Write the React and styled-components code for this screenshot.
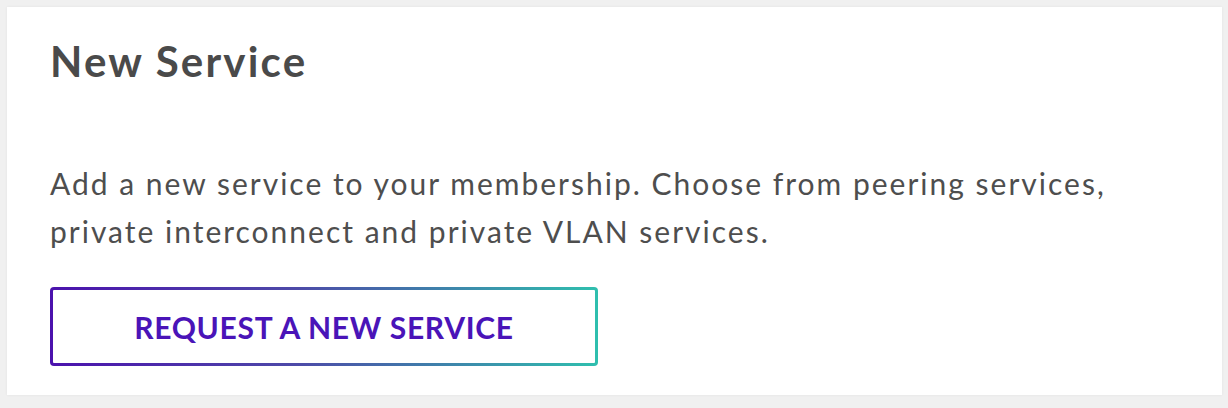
import React from 'react';
import styled, { createGlobalStyle } from 'styled-components';

const GlobalStyle = createGlobalStyle`
  body {
    margin: 0;
    background-color: #f0f0f0;
    font-family: Lato, "Open Sans", sans-serif;
  }
`;

const Page = styled.div`
  height: 408px;
  padding: 7px 6px 0 7px;
  box-sizing: border-box;
`;

const Card = styled.div`
  background-color: #ffffff;
  box-shadow: 0 0 3px rgba(0, 0, 0, 0.06);
  height: 388px;
  box-sizing: border-box;
  padding: 28px 43px 0;
  display: flex;
  flex-direction: column;
`;

const Title = styled.h2`
  margin: 0;
  font-size: 42px;
  font-weight: 700;
  line-height: 52px;
  letter-spacing: 2.2px;
  color: #4a4a4a;
`;

const Description = styled.p`
  margin: 72px 0 0;
  font-size: 30px;
  line-height: 48px;
  letter-spacing: 2px;
  color: #4e4e4e;
  max-width: 1100px;
`;

const OutlineButton = styled.button`
  margin-top: 32px;
  width: 548px;
  height: 79px;
  border: 3px solid transparent;
  border-radius: 4px;
  background:
    linear-gradient(#fff, #fff) padding-box,
    linear-gradient(90deg, #4b12ad 0%, #4d4aa8 45%, #2fbfae 100%) border-box;
  color: #4a14b8;
  font-family: Lato, "Open Sans", sans-serif;
  font-size: 30px;
  font-weight: 700;
  letter-spacing: 0.7px;
  text-transform: uppercase;
  cursor: pointer;
`;

const App = () => {
  return (
    <>
      <GlobalStyle />
      <Page>
        <Card>
          <Title>New Service</Title>
          <Description>
            Add a new service to your membership. Choose from peering services,
            private interconnect and private VLAN services.
          </Description>
          <div>
            <OutlineButton>Request a new service</OutlineButton>
          </div>
        </Card>
      </Page>
    </>
  );
};

export default App;
